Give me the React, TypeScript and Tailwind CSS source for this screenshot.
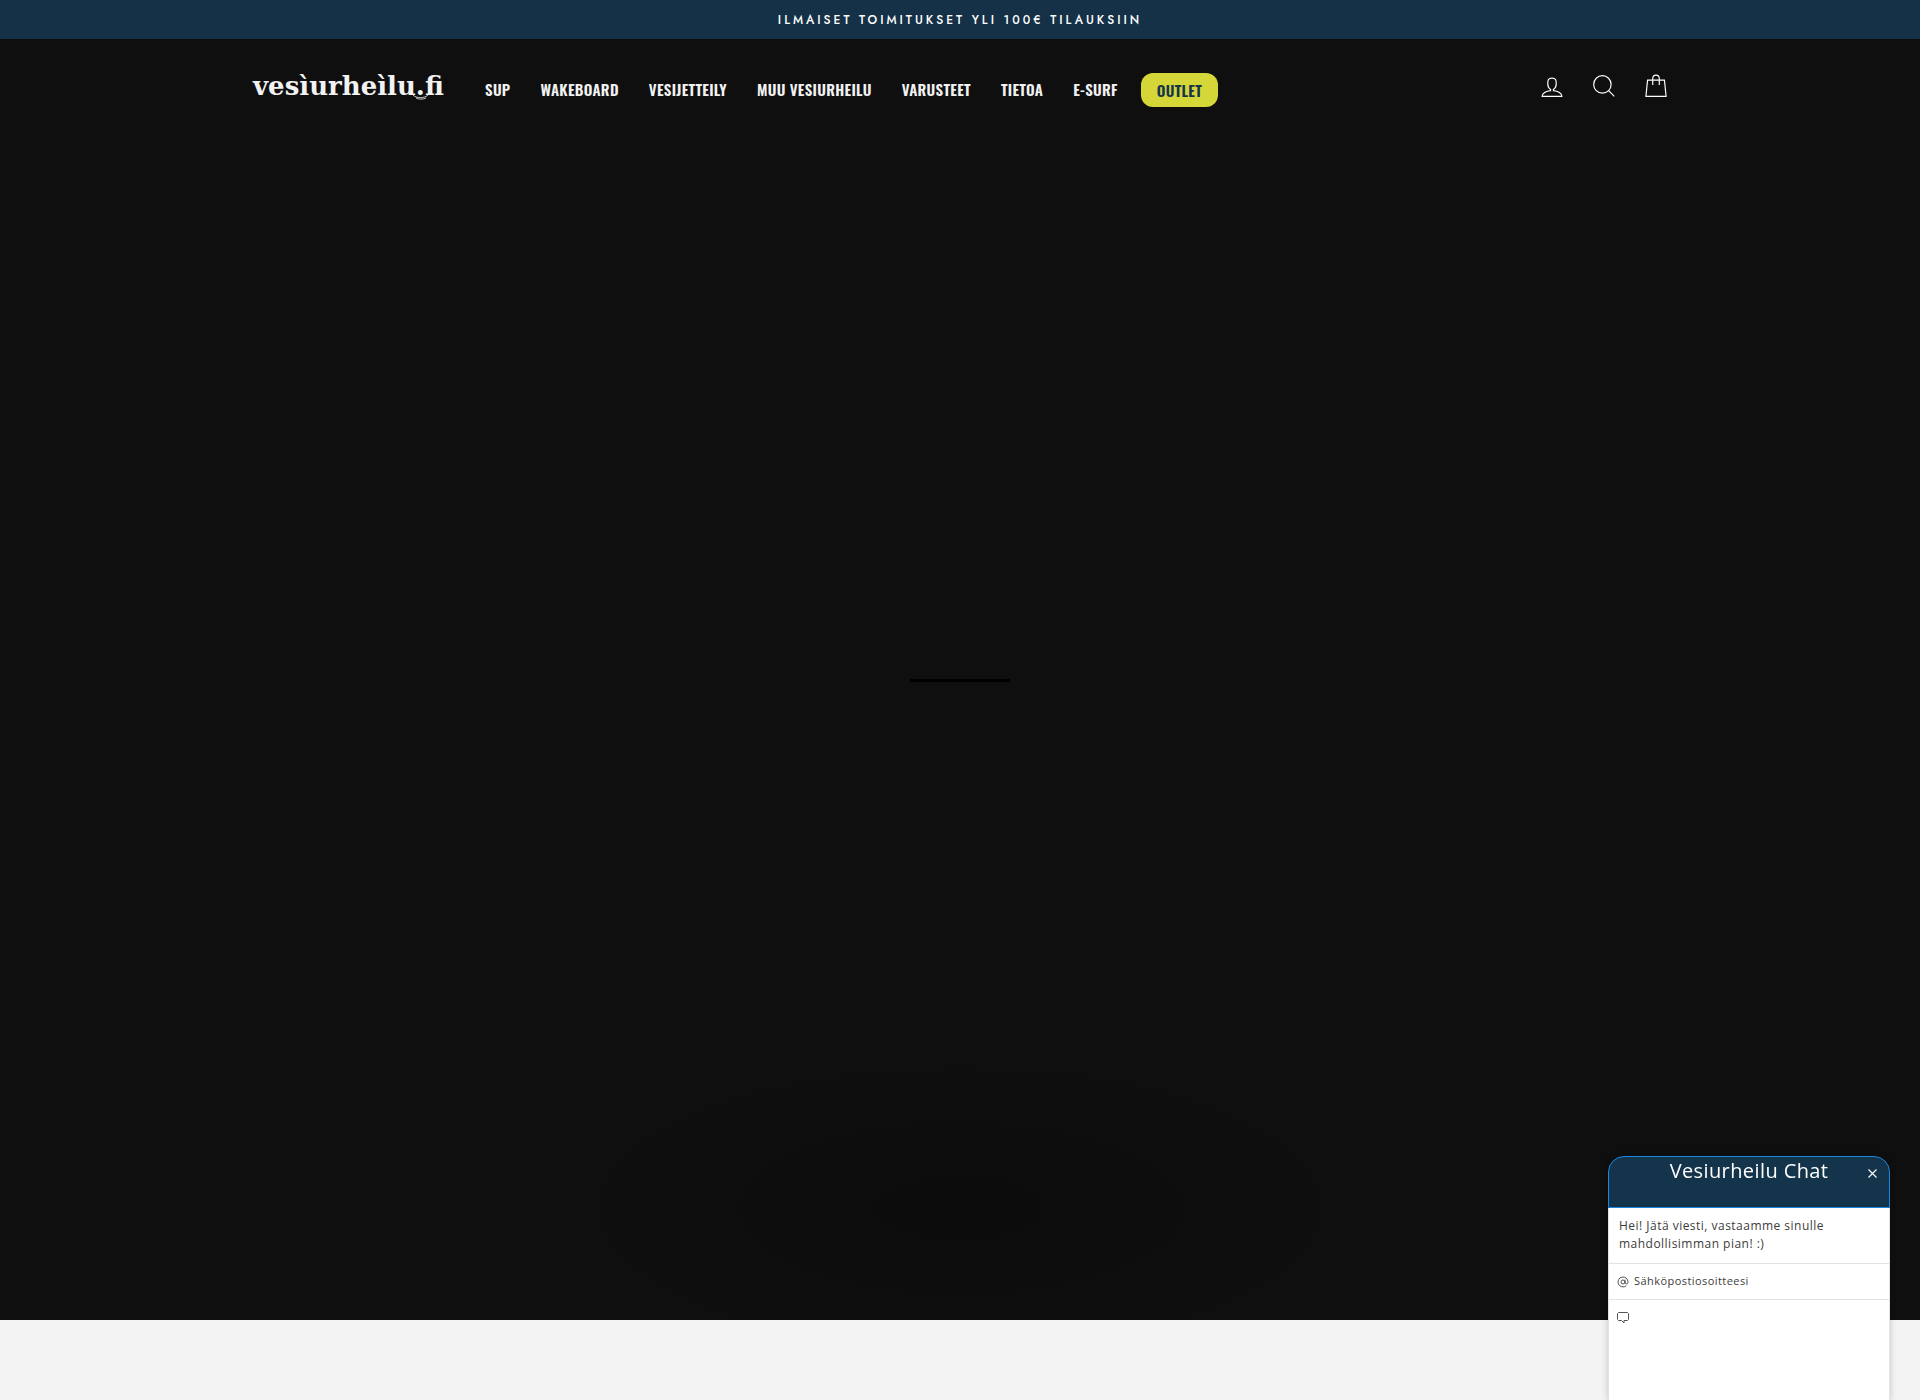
import { AtSign } from 'lucide-react';

interface NavItem {
  label: string;
  href: string;
}

const NAV_ITEMS: NavItem[] = [
  { label: 'SUP', href: '#sup' },
  { label: 'WAKEBOARD', href: '#wakeboard' },
  { label: 'VESIJETTEILY', href: '#vesijetteily' },
  { label: 'MUU VESIURHEILU', href: '#muu-vesiurheilu' },
  { label: 'VARUSTEET', href: '#varusteet' },
  { label: 'TIETOA', href: '#tietoa' },
  { label: 'E-SURF', href: '#e-surf' },
];

function AnnouncementBar() {
  return (
    <div className="h-[39px] bg-[#143148] flex items-center justify-center font-['Jost','Lato',sans-serif] text-xs font-medium tracking-[3px] text-white">
      ILMAISET TOIMITUKSET YLI 100€ TILAUKSIIN
    </div>
  );
}

function Logo() {
  return (
    <a href="#" className="block text-[#f2f2f2]">
      <svg width="200" height="40" viewBox="0 0 200 40" role="img" aria-label="vesiurheilu.fi">
        <text x="4" y="27" fontSize="26" className="font-['DejaVu_Serif',serif] font-bold" fill="currentColor">
          vesìurheìlu.fi
        </text>
        {/* Ripples under the dot */}
        <path d="M164 27c3 3.500 12 3.500 15 0M167 30c3 1.500 7 1.500 10 0" fill="none" stroke="currentColor" strokeWidth="0.800" />
      </svg>
    </a>
  );
}

function HeaderIcons() {
  return (
    <div className="flex items-center gap-[22px] text-white">
      <a href="#account" aria-label="Kirjaudu sisään">
        <svg className="size-[30px]" viewBox="0 0 64 64" fill="none" stroke="currentColor" strokeWidth="2.500">
          <path d="M35 41.840v-2.530c3.300-1.910 6-6.660 6-11.420 0-7.630 0-12.820-9-12.820s-9 5.190-9 12.820c0 4.760 2.700 9.510 6 11.420v2.530c-10.180.85-18 6-18 12.160h42c0-6.190-7.820-11.310-18-12.160z" />
        </svg>
      </a>
      <button type="button" aria-label="Haku">
        <svg className="size-[30px]" viewBox="0 0 64 64" fill="none" stroke="currentColor" strokeWidth="2.500">
          <path d="M47.160 28.580A18.580 18.580 0 1 1 28.580 10a18.580 18.580 0 0 1 18.580 18.580zM54 54L41.940 42" />
        </svg>
      </button>
      <a href="#cart" aria-label="Ostoskori">
        <svg className="size-[30px]" viewBox="0 0 64 64" fill="none" stroke="currentColor" strokeWidth="2.500">
          <path d="M14 19.500h36l3.500 34.500h-43zM25 30v-13c0-11 14-11 14 0v13" />
        </svg>
      </a>
    </div>
  );
}

function SiteHeader() {
  return (
    <header className="w-full max-w-[1500px] mx-auto px-[39px] h-[98px] flex items-center">
      <Logo />
      <nav className="ml-[21px] pt-0.5 flex items-center font-['Oswald','Roboto_Condensed',sans-serif] text-[15px] font-semibold tracking-[0.02em]">
        {NAV_ITEMS.map((item) => (
          <a key={item.href} href={item.href} className="px-[15px] text-[#f2f2f2] whitespace-nowrap">
            {item.label}
          </a>
        ))}
        <a href="#outlet" className="ml-2 mt-0.5 px-4 h-[34px] flex items-center rounded-xl bg-[#d4d737] text-[#14344c]">
          OUTLET
        </a>
      </nav>
      <div className="ml-auto pb-1">
        <HeaderIcons />
      </div>
    </header>
  );
}

function ChatWidget() {
  return (
    <aside className="fixed bottom-0 right-[30px] w-[282px] h-[244px] flex flex-col font-['Open_Sans',sans-serif] rounded-t-2xl shadow-[0_0_6px_rgba(0,0,0,0.2)]">
      <div className="relative h-[52px] shrink-0 rounded-t-2xl border border-[#1a86e0] bg-[#14344c] text-center text-white">
        <h2 className="text-xl leading-7 tracking-[0.02em]">Vesiurheilu Chat</h2>
        <button type="button" aria-label="Sulje" className="absolute right-3 top-3">
          <svg className="size-[9px]" viewBox="0 0 9 9" stroke="currentColor" strokeWidth="1.100">
            <path d="M0.500 0.500l8 8M8.500 0.500l-8 8" />
          </svg>
        </button>
      </div>
      <form className="flex-1 flex flex-col bg-white border-x border-[#e3e3e3] text-[#3c3c3c]">
        <p className="px-2.5 pt-[9px] pb-2.5 text-xs leading-[18px] tracking-[0.04em] border-b border-[#e3e3e3]">
          Hei! Jätä viesti, vastaamme sinulle mahdollisimman pian! :)
        </p>
        <label className="h-9 px-2 flex items-center gap-[5px] border-b border-[#e3e3e3]">
          <AtSign className="size-3 shrink-0 text-[#555]" strokeWidth={2} />
          <input
            type="email"
            aria-label="Sähköpostiosoitteesi"
            placeholder="Sähköpostiosoitteesi"
            className="w-full text-[11px] tracking-[0.04em] outline-none placeholder:text-[#3c3c3c]"
          />
        </label>
        <label className="flex-1 px-2 pt-3 flex items-start gap-[5px]">
          <svg className="size-3 shrink-0 text-[#555]" viewBox="0 0 12 12" fill="none" stroke="currentColor">
            <path d="M1.500 .5h9l1 1v6l-1 1h-3.500v2.500l-2.500-2.500h-3l-1-1v-6z" />
          </svg>
          <textarea aria-label="Viesti" className="w-full h-full resize-none text-[11px] outline-none" />
        </label>
      </form>
    </aside>
  );
}

export default function App() {
  return (
    <div className="min-h-screen flex flex-col bg-[#f3f3f3]">
      <AnnouncementBar />
      <div className="flex-1 flex flex-col bg-[#0f0f0f] bg-[radial-gradient(370px_144px_at_50%_calc(100%-112px),#0c0c0c,#0f0f0f)]">
        <SiteHeader />
        {/* Loading bar */}
        <main className="flex-1 flex items-center justify-center pb-24">
          <div className="w-[100px] h-[3px] bg-black" />
        </main>
      </div>
      <div className="h-20" />
      <ChatWidget />
    </div>
  );
}
